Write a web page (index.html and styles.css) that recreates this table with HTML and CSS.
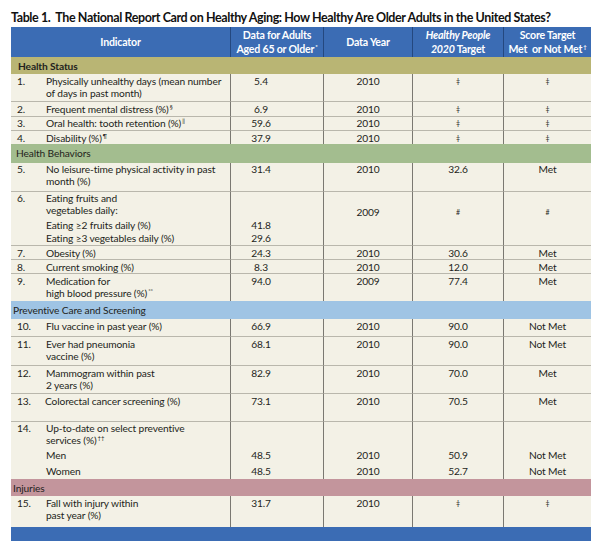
FILE: index.html
```html
<!DOCTYPE html>
<html lang="en">
<head>
<meta charset="utf-8">
<title>Table 1. The National Report Card on Healthy Aging</title>
<link rel="stylesheet" href="styles.css">
</head>
<body>
<div class="page">
  <h1 class="title">Table 1.&nbsp; The National Report Card on Healthy Aging: How Healthy Are Older Adults in the United States?</h1>
  <table class="card">
    <colgroup>
      <col class="c-ind"><col class="c-data"><col class="c-year"><col class="c-target"><col class="c-score">
    </colgroup>
    <thead>
      <tr class="head">
        <th>Indicator</th>
        <th>Data for Adults<br>Aged 65 or Older<sup>*</sup></th>
        <th>Data Year</th>
        <th><em>Healthy People</em><br><em>2020</em> Target</th>
        <th>Score Target<br>Met&nbsp; or Not Met<sup>†</sup></th>
      </tr>
    </thead>
    <tbody>
      <tr class="band olive"><td colspan="5" class="lbl-status"><strong>Health Status</strong></td></tr>
      <tr class="row h27">
        <td class="ind"><span class="n">1.</span><span class="t">Physically unhealthy days (mean number<br>of days in past month)</span></td>
        <td class="val">5.4</td><td>2010</td><td class="mark">‡</td><td class="mark">‡</td>
      </tr>
      <tr class="row h14-5">
        <td class="ind"><span class="n">2.</span><span class="t">Frequent mental distress (%)<sup>§</sup></span></td>
        <td class="val">6.9</td><td>2010</td><td class="mark">‡</td><td class="mark">‡</td>
      </tr>
      <tr class="row h14-5">
        <td class="ind"><span class="n">3.</span><span class="t">Oral health: tooth retention (%)<sup>‖</sup></span></td>
        <td class="val">59.6</td><td>2010</td><td class="mark">‡</td><td class="mark">‡</td>
      </tr>
      <tr class="row h14">
        <td class="ind"><span class="n">4.</span><span class="t">Disability (%)<sup>¶</sup></span></td>
        <td class="val">37.9</td><td>2010</td><td class="mark">‡</td><td class="mark">‡</td>
      </tr>
      <tr class="band green"><td colspan="5" class="lbl-behav">Health Behaviors</td></tr>
      <tr class="row h28">
        <td class="ind"><span class="n">5.</span><span class="t">No leisure-time physical activity in past<br>month (%)</span></td>
        <td class="val">31.4</td><td>2010</td><td>32.6</td><td>Met</td>
      </tr>
      <tr class="row h54-5">
        <td class="ind"><span class="n">6.</span><span class="t">Eating fruits and<br>vegetables daily:<span class="subs"><span class="sub">Eating ≥2 fruits daily (%)</span><span class="sub">Eating ≥3 vegetables daily (%)</span></span></span></td>
        <td class="val pair"><span class="sub">41.8</span><span class="sub">29.6</span></td>
        <td class="second">2009</td><td class="mark second">#</td><td class="mark second">#</td>
      </tr>
      <tr class="row h14">
        <td class="ind"><span class="n">7.</span><span class="t">Obesity (%)</span></td>
        <td class="val">24.3</td><td>2010</td><td>30.6</td><td>Met</td>
      </tr>
      <tr class="row h14">
        <td class="ind"><span class="n">8.</span><span class="t">Current smoking (%)</span></td>
        <td class="val">8.3</td><td>2010</td><td>12.0</td><td>Met</td>
      </tr>
      <tr class="row h28">
        <td class="ind"><span class="n">9.</span><span class="t">Medication for<br>high blood pressure (%)<sup>**</sup></span></td>
        <td class="val">94.0</td><td>2009</td><td>77.4</td><td>Met</td>
      </tr>
      <tr class="band blue"><td colspan="5" class="lbl-prev">Preventive Care and Screening</td></tr>
      <tr class="row h17">
        <td class="ind"><span class="n">10.</span><span class="t">Flu vaccine in past year (%)</span></td>
        <td class="val">66.9</td><td>2010</td><td>90.0</td><td>Not Met</td>
      </tr>
      <tr class="row h29">
        <td class="ind"><span class="n">11.</span><span class="t">Ever had pneumonia<br>vaccine (%)</span></td>
        <td class="val">68.1</td><td>2010</td><td>90.0</td><td>Not Met</td>
      </tr>
      <tr class="row h28">
        <td class="ind"><span class="n">12.</span><span class="t">Mammogram within past<br>2 years (%)</span></td>
        <td class="val">82.9</td><td>2010</td><td>70.0</td><td>Met</td>
      </tr>
      <tr class="row h27-5">
        <td class="ind"><span class="n">13.</span><span class="t tight">Colorectal cancer screening (%)</span></td>
        <td class="val">73.1</td><td>2010</td><td>70.5</td><td>Met</td>
      </tr>
      <tr class="row h58-5">
        <td class="ind"><span class="n">14.</span><span class="t">Up-to-date on select preventive<br>services (%)<sup>††</sup><span class="subs wide"><span class="sub">Men</span><span class="sub">Women</span></span></span></td>
        <td class="val pair wide"><span class="sub">48.5</span><span class="sub">48.5</span></td>
        <td class="pair wide"><span class="sub">2010</span><span class="sub">2010</span></td>
        <td class="pair wide"><span class="sub">50.9</span><span class="sub">52.7</span></td>
        <td class="pair wide"><span class="sub">Not Met</span><span class="sub">Not Met</span></td>
      </tr>
      <tr class="band pink"><td colspan="5" class="lbl-inj">Injuries</td></tr>
      <tr class="row h31">
        <td class="ind"><span class="n">15.</span><span class="t">Fall with injury within<br>past year (%)</span></td>
        <td class="val">31.7</td><td>2010</td><td class="mark">‡</td><td class="mark">‡</td>
      </tr>
    </tbody>
    <tfoot>
      <tr class="foot"><td colspan="5"></td></tr>
    </tfoot>
  </table>
</div>
</body>
</html>
```

FILE: styles.css
```css
html, body {
  margin: 0;
  padding: 0;
  background: #ffffff;
}

body {
  font-family: Lato, "Open Sans", sans-serif;
  color: #231f20;
  font-size: 10.2px;
  letter-spacing: -0.12px;
}

.page {
  width: 580px;
  padding: 10px 9px 0 11px;
}

.title {
  margin: 0 0 1px;
  font-size: 12.5px;
  line-height: 16px;
  font-weight: 700;
  letter-spacing: -0.4px;
  white-space: nowrap;
  color: #111;
}

.card {
  width: 580px;
  table-layout: fixed;
  border-collapse: separate;
  border-spacing: 0;
  background: #f3f1e6;
}

.c-ind { width: 219px; }
.c-data { width: 93px; }
.c-year { width: 89px; }
.c-target { width: 91px; }
.c-score { width: 88px; }

.head { height: 30px; }

th {
  padding: 0;
  background: #3b6cb4;
  color: #ffffff;
  font-weight: 700;
  font-size: 10.6px;
  letter-spacing: -0.2px;
  line-height: 14px;
  text-align: center;
  vertical-align: middle;
  white-space: nowrap;
}

th + th {
  border-left: 1px solid #24487f;
}

th sup, td sup {
  font-size: 6px;
  line-height: 0;
  vertical-align: 4px;
  margin-left: 1px;
}

td {
  padding: 0.5px 0 0;
  line-height: 12px;
  vertical-align: top;
  text-align: center;
  white-space: nowrap;
}

.row td + td {
  border-left: 1px solid #7a7871;
}

.row + .row td {
  border-top: 1px solid #b9b7ac;
}

.h14 { height: 14px; }
.h14-5 { height: 14.5px; }
.h17 { height: 17px; }
.h27 { height: 27px; }
.h27-5 { height: 27.5px; }
.h28 { height: 28px; }
.h29 { height: 29px; }
.h31 { height: 31px; }
.h54-5 { height: 54.5px; }
.h58-5 { height: 58.5px; }

td.ind {
  text-align: left;
  padding-left: 6px;
}

.ind .n {
  display: inline-block;
  width: 29px;
  vertical-align: top;
}

.ind .t {
  display: inline-block;
  vertical-align: top;
}

.ind .t.tight {
  margin-left: -1px;
}

.subs {
  display: block;
  margin-top: 2.5px;
}

.sub {
  display: block;
  line-height: 13px;
}

.subs.wide {
  margin-top: 1px;
}

.subs.wide .sub,
.pair.wide .sub {
  line-height: 16px;
}

td.pair {
  padding-top: 27px;
}

td.pair.wide {
  padding-top: 25.5px;
}

td.val {
  padding-right: 32px;
}

td.second {
  padding-top: 14px;
}

td.mark {
  font-size: 7px;
}

.band { height: 17px; }
.band.green { height: 18.5px; }
.band.blue { height: 18px; }

.band td {
  padding: 0;
  line-height: 14px;
  vertical-align: middle;
  text-align: left;
  color: #231f20;
}

.band.olive td { background: #b9b574; }
.band.green td { background: #a3bd8f; }
.band.blue td { background: #9fc4e4; }
.band.pink td { background: #c3959c; }

.lbl-status { padding-left: 7px !important; }
.lbl-behav { padding-left: 5px !important; }
.lbl-prev { padding-left: 2px !important; }
.lbl-inj { padding-left: 2px !important; }

.band strong { font-weight: 700; }

.foot { height: 13.5px; }

.foot td {
  padding: 0;
  background: #3b6cb4;
}
```
